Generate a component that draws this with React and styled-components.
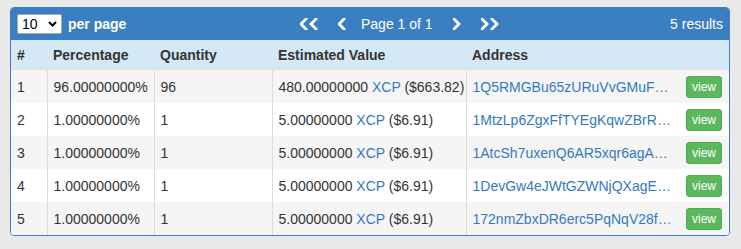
import React from "react";
import styled, { createGlobalStyle } from "styled-components";

const GlobalStyle = createGlobalStyle`
  body {
    margin: 0;
    background: #e9e9e9;
    font-family: "Liberation Sans", Arial, sans-serif;
    font-size: 14px;
    color: #333;
  }
`;

const Page = styled.div`
  padding: 7px 11px 12px 10px;
`;

const Panel = styled.div`
  border: 1px solid #3a7fc2;
  border-radius: 4px;
  overflow: hidden;
  background: #fff;
`;

const Toolbar = styled.div`
  display: grid;
  grid-template-columns: 283px auto 1fr;
  align-items: center;
  height: 32px;
  padding: 0 6px;
  background: #3a7fc2;
  color: #fff;
`;

const PerPage = styled.label`
  display: flex;
  align-items: center;
  gap: 6px;
  font-weight: bold;
`;

const SelectWrap = styled.span`
  position: relative;
  display: inline-flex;
`;

const Select = styled.select`
  appearance: none;
  width: 45px;
  height: 20px;
  padding: 0 0 0 4px;
  border: 1px solid #a9a9a9;
  border-radius: 2px;
  background: #fff;
  color: #000;
  font-family: "Liberation Sans", Arial, sans-serif;
  font-size: 14px;
`;

const Caret = styled.svg`
  position: absolute;
  right: 5px;
  top: 7px;
  pointer-events: none;
`;

const Pager = styled.div`
  display: flex;
  align-items: center;
`;

const PagerButton = styled.button`
  display: inline-flex;
  align-items: center;
  padding: 0;
  margin: ${(p) => p.$margin || "0"};
  border: 0;
  background: none;
  color: #fff;
  cursor: pointer;
`;

const PageLabel = styled.span`
  margin: 0 20px 0 15px;
`;

const Results = styled.div`
  text-align: right;
`;

const Table = styled.table`
  width: 100%;
  border-collapse: collapse;
  table-layout: fixed;
`;

const HeadRow = styled.tr`
  background: #d4e8f6;
`;

const Th = styled.th`
  height: 29px;
  padding: 0 6px;
  text-align: left;
  font-weight: bold;
  border-bottom: 1px solid #ddd;
`;

const Row = styled.tr`
  background: ${(p) => (p.$striped ? "#f5f5f5" : "#fff")};
  & + & td {
    border-top: 1px solid #ddd;
  }
`;

const Td = styled.td`
  height: 33px;
  padding: 0 6px;
  vertical-align: middle;
  white-space: nowrap;
  border-left: ${(p) => (p.$first ? "0" : "1px solid #ddd")};
`;

const Link = styled.a`
  color: #3479bf;
  text-decoration: none;
`;

const AddressCell = styled.div`
  display: flex;
  align-items: center;
  gap: 14px;
  padding-right: 1px;
`;

const Address = styled(Link)`
  flex: 1;
  min-width: 0;
  overflow: hidden;
  text-overflow: ellipsis;
  white-space: nowrap;
`;

const ViewButton = styled.button`
  flex: none;
  height: 22px;
  padding: 0 5px;
  border: 1px solid #4cae4c;
  border-radius: 3px;
  background: #5cb85c;
  color: #fff;
  font-family: "Liberation Sans", Arial, sans-serif;
  font-size: 12px;
  cursor: pointer;
`;

const Chevron = ({ dir = "left", double }) => {
  const one = (x) =>
    dir === "left"
      ? `M${x + 6} 1 L${x + 1} 6 L${x + 6} 11`
      : `M${x + 1} 1 L${x + 6} 6 L${x + 1} 11`;
  const width = double ? 18 : 8;
  return (
    <svg width={width} height="12" viewBox={`0 0 ${width} 12`}>
      <path
        d={double ? `${one(0)} ${one(10)}` : one(0)}
        fill="none"
        stroke="#fff"
        strokeWidth="2.8"
        strokeLinecap="square"
      />
    </svg>
  );
};

const rows = [
  { n: 1, pct: "96.00000000%", qty: "96", amt: "480.00000000", usd: "($663.82)", addr: "1Q5RMGBu65zURuVvGMuFxyz4tLkP8aN2Qw" },
  { n: 2, pct: "1.00000000%", qty: "1", amt: "5.00000000", usd: "($6.91)", addr: "1MtzLp6ZgxFfTYEgKqwZBrR3pW9sLmN7dK" },
  { n: 3, pct: "1.00000000%", qty: "1", amt: "5.00000000", usd: "($6.91)", addr: "1AtcSh7uxenQ6AR5xqr6agAhT2vKpQ8eYm" },
  { n: 4, pct: "1.00000000%", qty: "1", amt: "5.00000000", usd: "($6.91)", addr: "1DevGw4eJWtGZWNjQXagEu9kR3bXcV5pLs" },
  { n: 5, pct: "1.00000000%", qty: "1", amt: "5.00000000", usd: "($6.91)", addr: "172nmZbxDR6erc5PqNqV28fHs4TgYw1JkB" },
];

const App = () => {
  return (
    <Page>
      <GlobalStyle />
      <Panel>
        <Toolbar>
          <PerPage>
            <SelectWrap>
              <Select defaultValue="10">
                <option value="10">10</option>
                <option value="25">25</option>
                <option value="50">50</option>
              </Select>
              <Caret width="9" height="6" viewBox="0 0 9 6">
                <path d="M1 1 L4.5 4.5 L8 1" fill="none" stroke="#000" strokeWidth="2" />
              </Caret>
            </SelectWrap>
            per page
          </PerPage>
          <Pager>
            <PagerButton $margin="0 20px 0 0">
              <Chevron dir="left" double />
            </PagerButton>
            <PagerButton>
              <Chevron dir="left" />
            </PagerButton>
            <PageLabel>Page 1 of 1</PageLabel>
            <PagerButton $margin="0 20px 0 0">
              <Chevron dir="right" />
            </PagerButton>
            <PagerButton>
              <Chevron dir="right" double />
            </PagerButton>
          </Pager>
          <Results>5 results</Results>
        </Toolbar>
        <Table>
          <colgroup>
            <col style={{ width: 36 }} />
            <col style={{ width: 107 }} />
            <col style={{ width: 118 }} />
            <col style={{ width: 194 }} />
            <col />
          </colgroup>
          <thead>
            <HeadRow>
              <Th>#</Th>
              <Th>Percentage</Th>
              <Th>Quantity</Th>
              <Th>Estimated Value</Th>
              <Th>Address</Th>
            </HeadRow>
          </thead>
          <tbody>
            {rows.map((r) => (
              <Row key={r.n} $striped={r.n % 2 === 1}>
                <Td $first>{r.n}</Td>
                <Td>{r.pct}</Td>
                <Td>{r.qty}</Td>
                <Td>
                  {r.amt} <Link href="#">XCP</Link> {r.usd}
                </Td>
                <Td>
                  <AddressCell>
                    <Address href="#">{r.addr}</Address>
                    <ViewButton>view</ViewButton>
                  </AddressCell>
                </Td>
              </Row>
            ))}
          </tbody>
        </Table>
      </Panel>
    </Page>
  );
};

export default App;
